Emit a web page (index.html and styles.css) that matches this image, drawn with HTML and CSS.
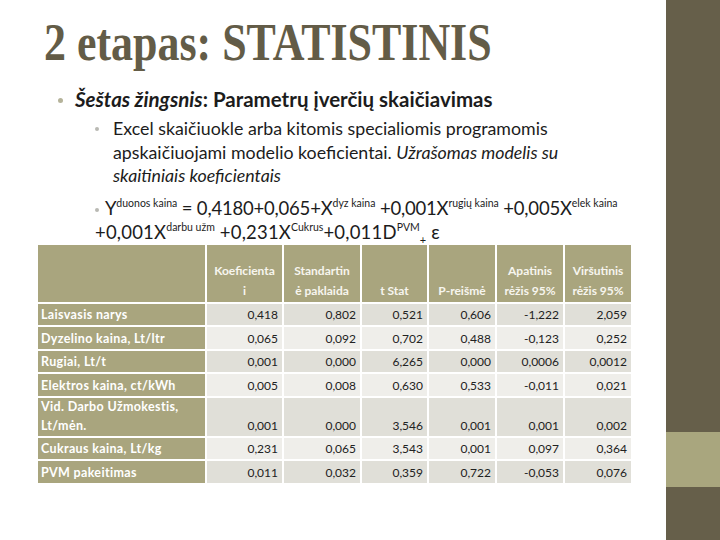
FILE: index.html
```html
<!DOCTYPE html>
<html lang="lt">
<head>
<meta charset="utf-8">
<title>2 etapas: STATISTINIS</title>
<link rel="stylesheet" href="styles.css">
</head>
<body>
<div class="slide">
  <main class="content">
    <h1 class="title"><span class="title-text">2 etapas: STATISTINIS</span></h1>
    <ul class="l1">
      <li class="l1-item"><em class="bi">Šeštas žingsnis</em>: Parametrų įverčių skaičiavimas
        <ul class="l2">
          <li class="l2-item">Excel skaičiuokle arba kitomis specialiomis programomis<br>apskaičiuojami modelio koeficientai. <i>Užrašomas modelis su<br>skaitiniais koeficientais</i></li>
          <li class="l2-item eq"><span class="eq-line">Y<sup>duonos kaina</sup> = 0,4180+0,065+X<sup>dyz kaina</sup> +0,001X<sup>rugių kaina</sup> +0,005X<sup>elek kaina</sup></span><br><span class="eq-line2">+0,001X<sup>darbu užm</sup> +0,231X<sup>Cukrus</sup>+0,011D<sup>PVM</sup><sub>+</sub> ε</span></li>
        </ul>
      </li>
    </ul>
    <div class="table">
      <div class="th first"></div>
      <div class="th">Koeficienta<br>i</div>
      <div class="th">Standartin<br>ė paklaida</div>
      <div class="th">t Stat</div>
      <div class="th">P-reišmė</div>
      <div class="th">Apatinis<br>rėžis 95%</div>
      <div class="th">Viršutinis<br>rėžis 95%</div>

      <div class="rh">Laisvasis narys</div>
      <div class="td dk">0,418</div><div class="td dk">0,802</div><div class="td dk">0,521</div><div class="td dk">0,606</div><div class="td dk">-1,222</div><div class="td dk">2,059</div>

      <div class="rh">Dyzelino kaina, Lt/ltr</div>
      <div class="td lt">0,065</div><div class="td lt">0,092</div><div class="td lt">0,702</div><div class="td lt">0,488</div><div class="td lt">-0,123</div><div class="td lt">0,252</div>

      <div class="rh">Rugiai, Lt/t</div>
      <div class="td dk">0,001</div><div class="td dk">0,000</div><div class="td dk">6,265</div><div class="td dk">0,000</div><div class="td dk">0,0006</div><div class="td dk">0,0012</div>

      <div class="rh">Elektros kaina, ct/kWh</div>
      <div class="td lt">0,005</div><div class="td lt">0,008</div><div class="td lt">0,630</div><div class="td lt">0,533</div><div class="td lt">-0,011</div><div class="td lt">0,021</div>

      <div class="rh">Vid. Darbo Užmokestis,<br>Lt/mėn.</div>
      <div class="td dk">0,001</div><div class="td dk">0,000</div><div class="td dk">3,546</div><div class="td dk">0,001</div><div class="td dk">0,001</div><div class="td dk">0,002</div>

      <div class="rh">Cukraus kaina, Lt/kg</div>
      <div class="td lt">0,231</div><div class="td lt">0,065</div><div class="td lt">3,543</div><div class="td lt">0,001</div><div class="td lt">0,097</div><div class="td lt">0,364</div>

      <div class="rh">PVM pakeitimas</div>
      <div class="td dk">0,011</div><div class="td dk">0,032</div><div class="td dk">0,359</div><div class="td dk">0,722</div><div class="td dk">-0,053</div><div class="td dk">0,076</div>
    </div>
  </main>
  <aside class="side">
    <div class="side-dark"></div>
    <div class="side-olive"></div>
    <div class="side-dark2"></div>
  </aside>
</div>
</body>
</html>
```
FILE: styles.css
```css
html, body {
  margin: 0;
  padding: 0;
  background: #ffffff;
}
.slide {
  width: 720px;
  height: 540px;
  display: flex;
  overflow: hidden;
  font-family: Lato, "Noto Sans", sans-serif;
  color: #1c1c1c;
}
.content {
  flex: 1;
  padding-top: 17px;
  min-width: 0;
}
.title {
  margin: 0 0 0 44px;
  font-family: "Liberation Serif", serif;
  font-weight: 700;
  font-size: 52px;
  line-height: 52px;
  color: #635c47;
  white-space: nowrap;
}
.title-text {
  display: inline-block;
  transform: scaleX(0.845);
  transform-origin: left center;
}
.l1, .l2 {
  list-style: none;
  margin: 0;
  padding: 0;
}
.l1 {
  margin-top: 18px;
}
.l1-item {
  position: relative;
  padding-left: 75px;
  font-size: 20.5px;
  line-height: 24px;
  font-weight: 700;
}
.l1-item::before {
  content: "";
  position: absolute;
  left: 58px;
  top: 11px;
  width: 5px;
  height: 5px;
  border-radius: 50%;
  background: #b5b39a;
}
.bi {
  font-style: italic;
}
.l2 {
  margin-top: 6px;
  margin-left: -75px;
}
.l2-item {
  position: relative;
  padding-left: 113px;
  font-size: 17.8px;
  line-height: 23.5px;
  font-weight: 400;
}
.l2-item::before {
  content: "";
  position: absolute;
  left: 95px;
  top: 10px;
  width: 4px;
  height: 4px;
  border-radius: 50%;
  background: #b9b9b3;
}
.eq {
  padding-left: 95px;
  margin-top: 8px;
  font-size: 18.5px;
  line-height: 24px;
}
.eq-line {
  padding-left: 10px;
  letter-spacing: -0.2px;
}
.eq-line2 {
  letter-spacing: 0.2px;
}
.eq::before {
  top: 12px;
}
.eq sup {
  font-size: 10.5px;
  line-height: 0;
  vertical-align: 8px;
  letter-spacing: 0;
}
.eq sub {
  font-size: 11px;
  line-height: 0;
  vertical-align: -5px;
}
.table {
  margin: 1px 0 0 38px;
  display: grid;
  grid-template-columns: 167px 75px 76px 65px 66px 66px 66px;
  grid-template-rows: 57px 21.5px 21.5px 21.5px 21.5px 38px 21.5px 21.5px;
  gap: 2px;
  font-size: 12px;
}
.th {
  background: #a9a57e;
  color: #f7f5ee;
  font-weight: 700;
  text-align: center;
  display: flex;
  align-items: flex-end;
  justify-content: center;
  line-height: 20px;
  padding-bottom: 1px;
}
.rh {
  background: #a9a57e;
  color: #ffffff;
  font-weight: 700;
  font-size: 12.5px;
  letter-spacing: 0.35px;
  padding-left: 3px;
  display: flex;
  align-items: flex-end;
  line-height: 19px;
  padding-bottom: 1px;
}
.td {
  display: flex;
  align-items: flex-end;
  justify-content: flex-end;
  padding-right: 4px;
  line-height: 19px;
  padding-bottom: 1px;
  color: #222222;
}
.dk {
  background: #e0dfd8;
}
.lt {
  background: #efeeea;
}
.side {
  width: 54px;
  display: flex;
  flex-direction: column;
}
.side-dark {
  height: 432px;
  background: #665f4a;
}
.side-olive {
  height: 55px;
  background: #a9a67e;
}
.side-dark2 {
  flex: 1;
  background: #665f4a;
}
```
